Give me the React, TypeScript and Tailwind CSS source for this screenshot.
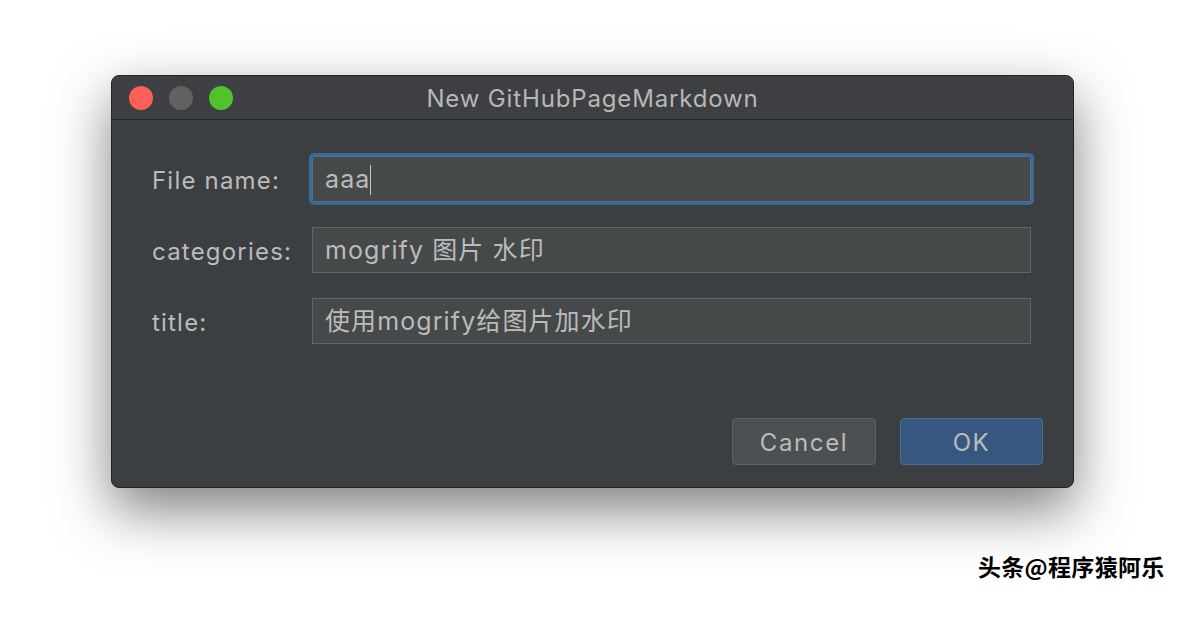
import React from "react";

const font = { fontFamily: 'Inter, "Noto Sans CJK SC", sans-serif' };

function Field({ label, value, focused }: { label: string; value: string; focused?: boolean }) {
  return (
    <div className="flex items-center h-[46px]">
      <div className="w-[160px] text-[24px] text-[#bbbbbb] tracking-[1.2px] pt-[3px]">{label}</div>
      <div
        className={
          "flex-1 h-[46px] flex items-center px-[12px] bg-[#45494a] text-[25px] text-[#bbbbbb] tracking-[1.1px] " +
          (focused
            ? "border border-[#5a6f86] outline-[3px] outline-solid outline-[#3a6a9c] rounded-[2px]"
            : "border border-[#646464]")
        }
      >
        <span className="pt-[2px]">{value}</span>
        {focused && <span className="w-[1.5px] h-[30px] bg-[#c8c8c8] -ml-[0.5px] mt-[2px]" />}
      </div>
    </div>
  );
}

export default function App() {
  return (
    <div className="w-[1186px] h-[636px] bg-white relative overflow-hidden" style={font}>
      <div className="pl-[111px] pt-[75px]">
        <div className="w-[963px] h-[413px] rounded-[8px] bg-[#3c3f41] border border-[#232425] shadow-[0_22px_55px_rgba(0,0,0,0.5)] flex flex-col overflow-hidden">
          <div className="h-[44px] shrink-0 flex items-center relative border-b border-[#232425] bg-[#3d3f42]">
            <div className="flex gap-[16px] pl-[17px]">
              <div className="w-[24px] h-[24px] rounded-full bg-[#fe5f57]" />
              <div className="w-[24px] h-[24px] rounded-full bg-[#616162]" />
              <div className="w-[24px] h-[24px] rounded-full bg-[#52c22b]" />
            </div>
            <div className="absolute inset-0 flex items-center justify-center text-[24px] text-[#b7b7b7] tracking-[0.85px] pt-[2px] pointer-events-none">
              New GitHubPageMarkdown
            </div>
          </div>
          <div className="flex-1 flex flex-col pl-[40px] pr-[42px] pt-[36px]">
            <div className="flex flex-col gap-[25px]">
              <Field label="File name:" value="aaa" focused />
              <Field label="categories:" value="mogrify 图片 水印" />
              <Field label="title:" value="使用mogrify给图片加水印" />
            </div>
          </div>
          <div className="flex justify-end gap-[24px] pr-[30px] pb-[22px]">
            <div className="w-[144px] h-[47px] rounded-[4px] bg-[#4c5052] border border-[#5e6163] flex items-center justify-center text-[24px] text-[#bbbbbb] tracking-[1.6px] pt-[2px]">
              Cancel
            </div>
            <div className="w-[143px] h-[47px] rounded-[4px] bg-[#365880] border border-[#4a6f94] flex items-center justify-center text-[24px] text-[#bbbbbb] tracking-[1.6px] pt-[2px]">
              OK
            </div>
          </div>
        </div>
      </div>
      <div
        className="absolute left-[978px] top-[549px] text-[23px] font-bold text-black tracking-[0.3px]"
        style={{ fontFamily: '"Noto Sans CJK SC", sans-serif' }}
      >
        头条@程序猿阿乐
      </div>
    </div>
  );
}
